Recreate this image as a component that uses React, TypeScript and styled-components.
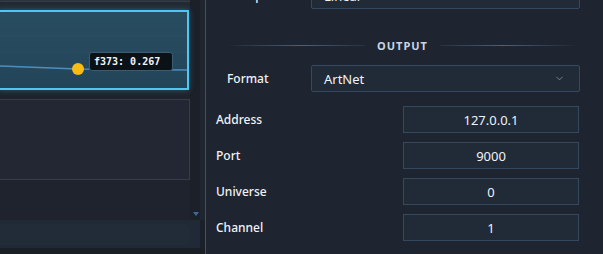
import React from 'react'
import styled, { createGlobalStyle } from 'styled-components'
import { ChevronDown } from 'lucide-react'

const GlobalStyle = createGlobalStyle`
  html, body {
    margin: 0;
    padding: 0;
    background: #1e2430;
    overflow: hidden;
  }
  body {
    font-family: "Noto Sans", "Liberation Sans", sans-serif;
  }
`

const Frame = styled.div`
  display: flex;
  width: 603px;
  height: 254px;
  overflow: hidden;
`

const LeftPane = styled.div`
  display: flex;
  flex-direction: column;
  width: 205px;
  flex: none;
  border-right: 1px solid #37536f;
  background: #1b2029;
`

const UpperArea = styled.div`
  display: flex;
  height: 220px;
`

const Content = styled.div`
  display: flex;
  flex-direction: column;
  width: 190px;
  background: #1e232d;
`

const TopBar = styled.div`
  height: 10px;
  flex: none;
  background: linear-gradient(#2a323c 0 1px, #333c46 1px 2px, #222932 2px);
`

const ChartBox = styled.div`
  position: relative;
  box-sizing: border-box;
  margin-left: -2px;
  width: 191px;
  height: 80px;
  flex: none;
  border: 2px solid #4fc6f4;
  background: linear-gradient(#284c60, #23455a);
  box-shadow: 0 0 6px rgba(79, 198, 244, 0.35);

  svg {
    display: block;
  }
`

const Tooltip = styled.div`
  position: absolute;
  left: 89px;
  top: 40px;
  box-sizing: border-box;
  width: 84px;
  height: 19px;
  padding: 0 4px;
  border: 1px solid #3c5a70;
  border-radius: 3px;
  background: #0b1217;
  color: #f2f5f8;
  font-family: "DejaVu Sans Mono", "Liberation Mono", monospace;
  font-size: 10px;
  font-weight: bold;
  line-height: 17px;
  white-space: nowrap;
`

const Panel = styled.div`
  box-sizing: border-box;
  margin-top: 9px;
  margin-left: -1px;
  width: 191px;
  height: 81px;
  flex: none;
  border: 1px solid #363d49;
  background: #222733;
`

const ScrollTrack = styled.div`
  display: flex;
  flex-direction: column;
  justify-content: flex-end;
  align-items: center;
  width: 15px;
  padding: 0 4px 4px 0;
  box-sizing: border-box;
  background: linear-gradient(90deg, #1b2029 0 10px, #20262f 10px);
`

const ScrollArrow = styled.div`
  width: 0;
  height: 0;
  border-left: 3px solid transparent;
  border-right: 3px solid transparent;
  border-top: 4px solid #3d6a96;
`

const BottomStrip = styled.div`
  display: flex;
  align-items: center;
  height: 28px;
  padding: 0 10px 0 0;
  background: linear-gradient(90deg, #202a36 0 200px, #1b2029 200px);
`

const StripInner = styled.div`
  height: 21px;
  width: 190px;
  border-radius: 0 6px 6px 0;
  background: #222c38;
`

const Footer = styled.div`
  flex: 1;
  background: #1a1f26;
`

const RightPane = styled.div`
  flex: 1;
  display: flex;
  flex-direction: column;
  background: #1e2430;
`

const SelectRow = styled.div<{ $top?: number }>`
  display: flex;
  align-items: center;
  height: 27px;
  padding: 0 23px 0 21px;
  margin-top: ${(p) => p.$top ?? 0}px;
`

const Label = styled.div<{ $width?: number }>`
  ${(p) => (p.$width ? `width: ${p.$width}px; flex: none;` : 'flex: 1;')}
  color: #f0f3f7;
  font-size: 12px;
  font-weight: 500;
  white-space: nowrap;
`

const Select = styled.div`
  display: flex;
  align-items: center;
  justify-content: space-between;
  box-sizing: border-box;
  flex: 1;
  height: 27px;
  padding: 0 14px 0 12px;
  border: 1px solid #34495f;
  border-radius: 2px;
  background: #212a37;
  color: #f0f3f7;
  font-size: 13px;

  svg {
    color: #9aa6b4;
  }
`

const SectionHeader = styled.div`
  display: flex;
  align-items: center;
  gap: 12px;
  height: 12px;
  padding: 30px 23px 14px 19px;
  color: #c8d5e2;
  font-size: 11px;
  font-weight: bold;
  letter-spacing: 1px;

  &::before,
  &::after {
    content: '';
    flex: 1;
    height: 1px;
  }
  &::before {
    background: linear-gradient(90deg, rgba(74, 98, 124, 0), #4a627c 55%, rgba(74, 98, 124, 0.2));
  }
  &::after {
    background: linear-gradient(90deg, rgba(74, 98, 124, 0.2), #4a627c 45%, rgba(74, 98, 124, 0));
  }
`

const FieldList = styled.div`
  display: flex;
  flex-direction: column;
  gap: 9px;
  margin-top: 14px;
`

const FieldRow = styled.div`
  display: flex;
  align-items: center;
  height: 27px;
  padding: 0 24px 0 10px;
`

const NumberInput = styled.div`
  display: flex;
  align-items: center;
  justify-content: center;
  box-sizing: border-box;
  width: 176px;
  height: 27px;
  border: 1px solid #34495f;
  background: #212a37;
  color: #f0f3f7;
  font-size: 13px;
`

const fields = [
  { label: 'Address', value: '127.0.0.1' },
  { label: 'Port', value: '9000' },
  { label: 'Universe', value: '0' },
  { label: 'Channel', value: '1' },
]

export default function App() {
  return (
    <>
      <GlobalStyle />
      <Frame>
        <LeftPane>
          <UpperArea>
            <Content>
              <TopBar />
              <ChartBox>
                <svg width="187" height="76" viewBox="0 0 187 76">
                  <line x1="0" y1="24" x2="187" y2="24" stroke="#2b5064" strokeWidth="1" />
                  <line x1="0" y1="40" x2="187" y2="40" stroke="#2a4e62" strokeWidth="1" />
                  <polyline points="0,54 78,57 187,58" fill="none" stroke="#4b8fc0" strokeWidth="1.5" />
                  <circle cx="78" cy="57" r="6" fill="#f9bc15" />
                </svg>
                <Tooltip>f373: 0.267</Tooltip>
              </ChartBox>
              <Panel />
            </Content>
            <ScrollTrack>
              <ScrollArrow />
            </ScrollTrack>
          </UpperArea>
          <BottomStrip>
            <StripInner />
          </BottomStrip>
          <Footer />
        </LeftPane>

        <RightPane>
          <SelectRow $top={-18}>
            <Label $width={84}>Interp</Label>
            <Select>Linear</Select>
          </SelectRow>
          <SectionHeader>OUTPUT</SectionHeader>
          <SelectRow>
            <Label $width={84}>Format</Label>
            <Select>
              ArtNet
              <ChevronDown size={11} strokeWidth={1.5} />
            </Select>
          </SelectRow>
          <FieldList>
            {fields.map((f) => (
              <FieldRow key={f.label}>
                <Label>{f.label}</Label>
                <NumberInput>{f.value}</NumberInput>
              </FieldRow>
            ))}
          </FieldList>
        </RightPane>
      </Frame>
    </>
  )
}
